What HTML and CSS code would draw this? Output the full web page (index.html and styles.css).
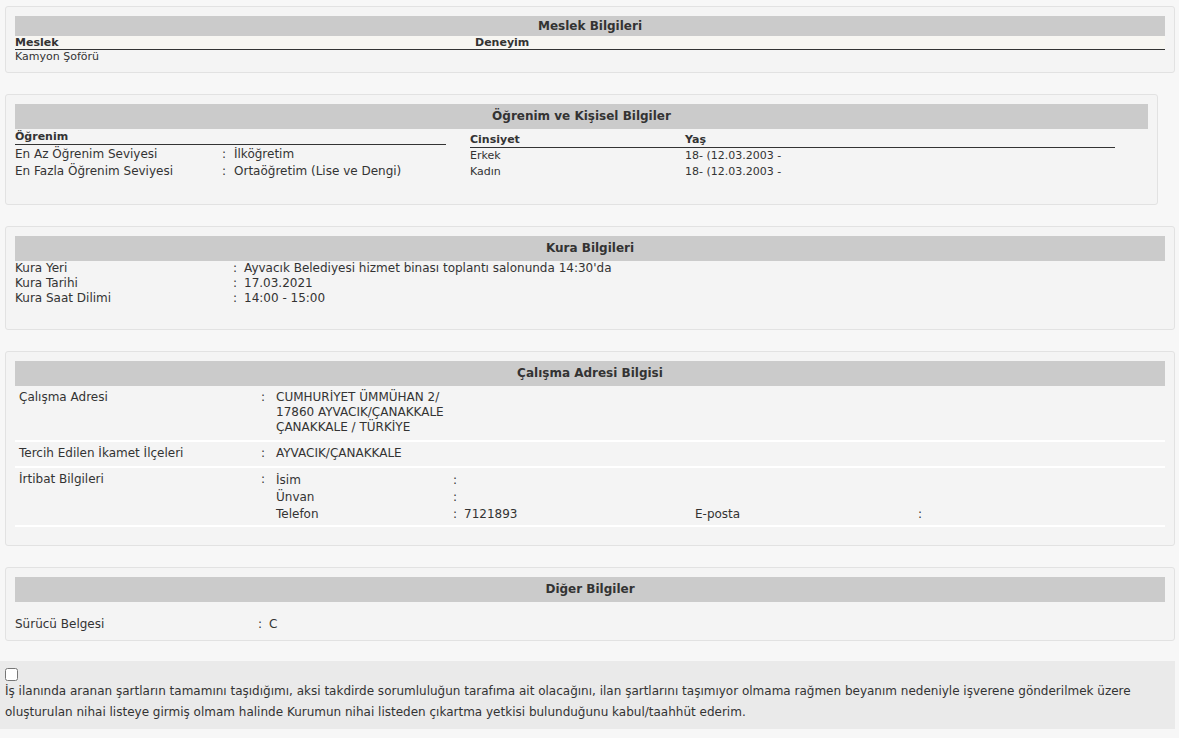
FILE: index.html
```html
<!DOCTYPE html>
<html lang="tr">
<head>
<meta charset="utf-8">
<title>İlan Detayı</title>
<link rel="stylesheet" href="styles.css">
</head>
<body>
<div class="page">

  <section class="panel">
    <div class="panel-title small">Meslek Bilgileri</div>
    <table class="grid meslek">
      <thead><tr><th class="c1">Meslek</th><th>Deneyim</th></tr></thead>
      <tbody><tr><td class="c1">Kamyon Şoförü</td><td></td></tr></tbody>
    </table>
  </section>

  <section class="panel narrow">
    <div class="panel-title">Öğrenim ve Kişisel Bilgiler</div>
    <div class="two-col">
      <table class="grid ogrenim">
        <thead><tr><th colspan="2">Öğrenim</th></tr></thead>
        <tbody>
          <tr><td class="olabel">En Az Öğrenim Seviyesi</td><td><span class="colon">:</span>İlköğretim</td></tr>
          <tr><td class="olabel">En Fazla Öğrenim Seviyesi</td><td><span class="colon">:</span>Ortaöğretim (Lise ve Dengi)</td></tr>
        </tbody>
      </table>
      <table class="grid kisisel">
        <thead><tr><th class="klabel">Cinsiyet</th><th>Yaş</th></tr></thead>
        <tbody>
          <tr><td class="klabel">Erkek</td><td>18- (12.03.2003 -</td></tr>
          <tr><td class="klabel">Kadın</td><td>18- (12.03.2003 -</td></tr>
        </tbody>
      </table>
    </div>
  </section>

  <section class="panel">
    <div class="panel-title">Kura Bilgileri</div>
    <table class="kura">
      <tr><td class="klab">Kura Yeri</td><td><span class="sep">:</span>Ayvacık Belediyesi hizmet binası toplantı salonunda 14:30'da</td></tr>
      <tr><td class="klab">Kura Tarihi</td><td><span class="sep">:</span>17.03.2021</td></tr>
      <tr><td class="klab">Kura Saat Dilimi</td><td><span class="sep">:</span>14:00 - 15:00</td></tr>
    </table>
  </section>

  <section class="panel">
    <div class="panel-title">Çalışma Adresi Bilgisi</div>
    <table class="adres">
      <tr>
        <td class="alab">Çalışma Adresi</td>
        <td class="acol">:</td>
        <td>CUMHURİYET ÜMMÜHAN 2/<br>17860 AYVACIK/ÇANAKKALE<br>ÇANAKKALE / TÜRKİYE</td>
      </tr>
      <tr>
        <td class="alab">Tercih Edilen İkamet İlçeleri</td>
        <td class="acol">:</td>
        <td>AYVACIK/ÇANAKKALE</td>
      </tr>
      <tr>
        <td class="alab">İrtibat Bilgileri</td>
        <td class="acol">:</td>
        <td>
          <table class="irtibat">
            <tr><td class="i1">İsim</td><td class="i2">:</td><td class="i3"></td><td class="i4"></td><td></td></tr>
            <tr><td class="i1">Ünvan</td><td class="i2">:</td><td class="i3"></td><td class="i4"></td><td></td></tr>
            <tr><td class="i1">Telefon</td><td class="i2"><span class="sep">:</span>7121893</td><td class="i3">E-posta</td><td class="i4">:</td><td></td></tr>
          </table>
        </td>
      </tr>
    </table>
  </section>

  <section class="panel">
    <div class="panel-title">Diğer Bilgiler</div>
    <div class="diger">
      <span class="dlab">Sürücü Belgesi</span><span><span class="sep">:</span>C</span>
    </div>
  </section>

  <div class="onay">
    <input type="checkbox" class="onay-check" id="onay">
    <label for="onay" class="onay-text">İş ilanında aranan şartların tamamını taşıdığımı, aksi takdirde sorumluluğun tarafıma ait olacağını, ilan şartlarını taşımıyor olmama rağmen beyanım nedeniyle işverene gönderilmek üzere oluşturulan nihai listeye girmiş olmam halinde Kurumun nihai listeden çıkartma yetkisi bulunduğunu kabul/taahhüt ederim.</label>
  </div>

</div>
</body>
</html>
```
FILE: styles.css
```css
html, body {
  margin: 0;
  padding: 0;
}
body {
  background: #f7f7f7;
  color: #333;
  font-family: "DejaVu Sans", Verdana, sans-serif;
  font-size: 12px;
}
.page {
  padding: 6px 4px 10px 0;
  display: flex;
  flex-direction: column;
  gap: 21px;
}
.panel {
  margin-left: 5px;
  background: #f4f4f4;
  border: 1px solid #e2e2e2;
  border-radius: 3px;
  padding: 9px 9px 8px 9px;
}
.panel.narrow {
  margin-right: 17px;
}
.panel-title {
  background: #cbcbcb;
  height: 25px;
  line-height: 25px;
  text-align: center;
  font-weight: bold;
  font-size: 12px;
  color: #333;
}
.panel-title.small {
  height: 20px;
  line-height: 20px;
}
table {
  border-collapse: collapse;
  border-spacing: 0;
}
td, th {
  padding: 0;
  text-align: left;
  vertical-align: top;
}
.grid {
  width: 100%;
}
.grid th {
  font-weight: bold;
  font-size: 11px;
  border-bottom: 1px solid #333;
}
.meslek {
  font-size: 11px;
}
.meslek th {
  line-height: 13px;
  background: #f7f6f2;
}
.meslek td {
  line-height: 14px;
}
.meslek .c1 {
  width: 460px;
}
.two-col {
  display: flex;
  gap: 24px;
  padding-bottom: 16px;
}
.ogrenim {
  width: 431px;
}
.ogrenim th {
  line-height: 15px;
}
.ogrenim td {
  line-height: 17px;
  font-size: 12px;
}
.ogrenim tbody tr:first-child td {
  padding-top: 1px;
}
.olabel {
  width: 207px;
}
.colon {
  display: inline-block;
  width: 12px;
}
.sep {
  display: inline-block;
  width: 11px;
}
.kisisel {
  width: 645px;
  margin-top: 4px;
  font-size: 11px;
}
.kisisel th {
  line-height: 14px;
}
.kisisel td {
  line-height: 15px;
}
.klabel {
  width: 215px;
}
.kura {
  margin-bottom: 15px;
}
.kura td {
  line-height: 15px;
}
.klab {
  width: 218px;
}
.adres {
  width: 100%;
  margin-bottom: 10px;
}
.adres > tbody > tr > td {
  padding: 4px 0 5px 4px;
  line-height: 15px;
  border-bottom: 2px solid #ffffff;
}
.adres > tbody > tr:last-child > td {
  padding-bottom: 2px;
}
.adres .alab {
  width: 238px;
}
.adres .acol {
  width: 11px;
}
.irtibat {
  width: 100%;
}
.irtibat td {
  padding: 0;
  line-height: 17px;
}
.i1 {
  width: 177px;
}
.i2 {
  width: 242px;
}
.i3 {
  width: 223px;
}
.i4 {
  width: 20px;
}
.diger {
  display: flex;
  padding-top: 15px;
  line-height: 15px;
}
.dlab {
  width: 243px;
}
.onay {
  background: #eaeaea;
  padding: 7px 4px 6px 5px;
  margin-top: -1px;
}
.onay-check {
  display: block;
  margin: 0;
  width: 13px;
  height: 13px;
}
.onay-text {
  display: block;
  line-height: 21px;
  font-size: 12px;
}
```
